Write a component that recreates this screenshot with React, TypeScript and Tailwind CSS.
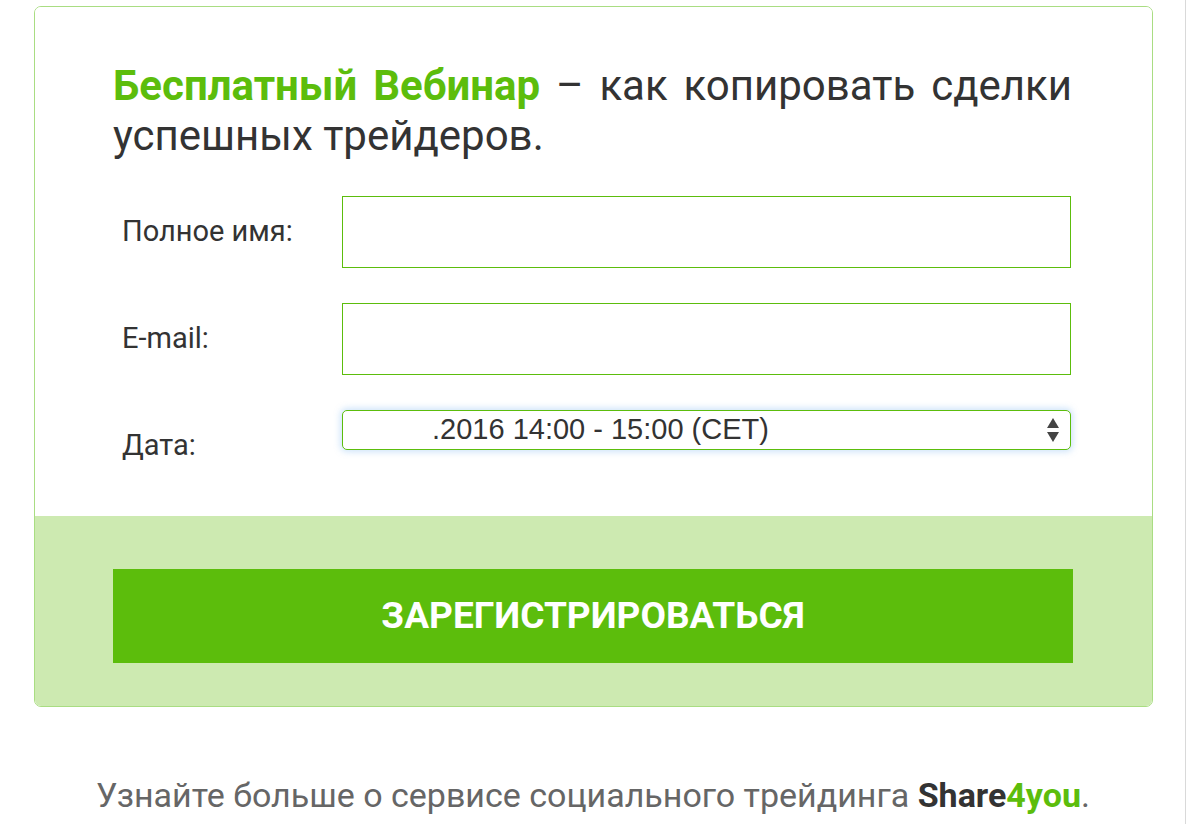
export default function App() {
  return (
    <div className="min-h-screen bg-white" style={{ fontFamily: 'Roboto, "Liberation Sans", sans-serif' }}>
      <div className="w-[1186px] min-h-[824px] border-r border-[#d9d9d9] pt-[6px]">
        {/* Card */}
        <div className="ml-[34px] w-[1119px] rounded-[7px] border border-[#a9dd82] overflow-hidden">
          <div className="bg-white pl-[78px] pr-[80px] pt-[54px] pb-[66px]">
            <h1 className="text-[42px] leading-[50px] text-[#333] text-justify">
              <span className="font-bold text-[#5cbd0c]">Бесплатный Вебинар</span> – как копировать сделки успешных трейдеров.
            </h1>

            <div className="mt-[35px] flex flex-col gap-[35px]">
              <div className="flex items-center h-[72px]">
                <label className="w-[229px] pl-[9px] text-[29px] text-[#333]">Полное имя:</label>
                <div className="w-[729px] h-[72px] border border-[#5cbd0c] bg-white" />
              </div>
              <div className="flex items-center h-[72px]">
                <label className="w-[229px] pl-[9px] text-[29px] text-[#333]">E-mail:</label>
                <div className="w-[729px] h-[72px] border border-[#5cbd0c] bg-white" />
              </div>
              <div className="flex h-[72px] -mb-[32px]">
                <label className="w-[229px] pl-[9px] text-[29px] text-[#333] h-[72px] flex items-center">Дата:</label>
                <div className="w-[729px] h-[40px] rounded-[5px] border border-[#5cbd0c] bg-white shadow-[0_0_6px_2px_rgba(120,180,240,0.35)] flex items-center justify-between pl-[89px] pr-[10px]">
                  <span className="text-[29px] text-[#333]" style={{ fontFamily: '"Liberation Sans", Arial, sans-serif' }}>
                    .2016 14:00 - 15:00 (CET)
                  </span>
                  <svg width="14" height="26" viewBox="0 0 14 26">
                    <path d="M7 1 L13 11 L1 11 Z" fill="#444" />
                    <path d="M1 15 L13 15 L7 25 Z" fill="#444" />
                  </svg>
                </div>
              </div>
            </div>
          </div>

          <div className="bg-[#cdeab1] pl-[78px] pr-[79px] pt-[53px] pb-[43px]">
            <button className="w-full h-[94px] bg-[#5cbd0c] text-white font-bold text-[37px]">
              ЗАРЕГИСТРИРОВАТЬСЯ
            </button>
          </div>
        </div>

        <p className="mt-[63px] ml-[96px] text-[34px] text-[#666] whitespace-nowrap">
          Узнайте больше о сервисе социального трейдинга{' '}
          <span className="font-bold text-[#333]">Share</span>
          <span className="font-bold text-[#5cbd0c]">4you</span>.
        </p>
      </div>
    </div>
  );
}
